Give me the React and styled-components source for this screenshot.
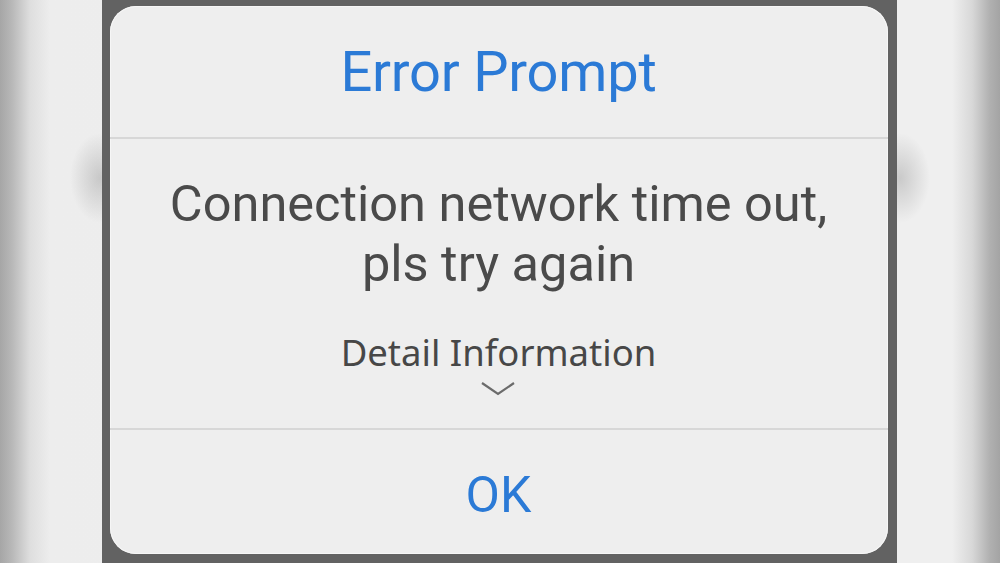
import styled, { createGlobalStyle } from "styled-components";

const GlobalStyle = createGlobalStyle`
  html, body {
    margin: 0;
    padding: 0;
    width: 1000px;
    height: 563px;
    overflow: hidden;
  }
  body {
    font-family: Roboto, "Noto Sans", "Liberation Sans", sans-serif;
  }
`;

const Page = styled.div`
  width: 1000px;
  height: 563px;
  display: flex;
  justify-content: center;
  background:
    radial-gradient(ellipse 30px 45px at 100px 178px, rgba(90, 90, 90, 0.25), rgba(90, 90, 90, 0) 100%),
    radial-gradient(ellipse 30px 45px at 900px 178px, rgba(90, 90, 90, 0.25), rgba(90, 90, 90, 0) 100%),
    linear-gradient(
      to right,
      #a6a6a6 0px,
      #b8b8b8 12px,
      #dedede 30px,
      #ededed 50px,
      #efefef 900px,
      #efefef 952px,
      #d8d8d8 972px,
      #b0b0b0 990px,
      #a4a4a4 1000px
    );
`;

const Frame = styled.div`
  width: 795px;
  height: 563px;
  box-sizing: border-box;
  margin-left: -2px;
  padding: 6px 9px 9px 8px;
  background: #626262;
`;

const Dialog = styled.div`
  height: 100%;
  display: flex;
  flex-direction: column;
  background: #eeeeee;
  border-radius: 26px;
  overflow: hidden;
  box-shadow: inset 0 0 0 1px #f6f6f6;
`;

const TitleBar = styled.div`
  height: 131px;
  display: flex;
  align-items: center;
  justify-content: center;
  border-bottom: 2px solid #d7d7d7;
`;

const Title = styled.h1`
  margin: 0;
  font-weight: 400;
  font-size: 56px;
  color: #2b7ad6;
  letter-spacing: -0.2px;
`;

const Body = styled.div`
  height: 291px;
  box-sizing: border-box;
  padding-top: 35px;
  display: flex;
  flex-direction: column;
  align-items: center;
  border-bottom: 2px solid #d7d7d7;
`;

const Message = styled.p`
  margin: 0;
  font-size: 50.5px;
  line-height: 60px;
  color: #4a4a4a;
  text-align: center;
`;

const DetailToggle = styled.button`
  margin-top: 36px;
  padding: 0;
  border: none;
  background: none;
  display: flex;
  flex-direction: column;
  align-items: center;
  font-family: inherit;
  cursor: pointer;
`;

const DetailLabel = styled.span`
  font-family: "Noto Sans", Roboto, sans-serif;
  font-size: 36.5px;
  line-height: 44px;
  color: #474747;
`;

const Chevron = styled.svg`
  margin-top: 6px;
  display: block;
`;

const Footer = styled.div`
  flex: 1;
  display: flex;
  align-items: center;
  justify-content: center;
  padding-top: 6px;
`;

const OkButton = styled.button`
  border: none;
  background: none;
  padding: 0;
  font-family: inherit;
  font-size: 50px;
  color: #2b7ad6;
  cursor: pointer;
`;

export default function App() {
  return (
    <>
      <GlobalStyle />
      <Page>
        <Frame>
          <Dialog>
            <TitleBar>
              <Title>Error Prompt</Title>
            </TitleBar>
            <Body>
              <Message>
                Connection network time out,
                <br />
                pls try again
              </Message>
              <DetailToggle>
                <DetailLabel>Detail Information</DetailLabel>
                <Chevron width="36" height="18" viewBox="0 0 36 18">
                  <polyline
                    points="2,3 18,14 34,3"
                    fill="none"
                    stroke="#6b6b6b"
                    strokeWidth="2.2"
                  />
                </Chevron>
              </DetailToggle>
            </Body>
            <Footer>
              <OkButton>OK</OkButton>
            </Footer>
          </Dialog>
        </Frame>
      </Page>
    </>
  );
}
